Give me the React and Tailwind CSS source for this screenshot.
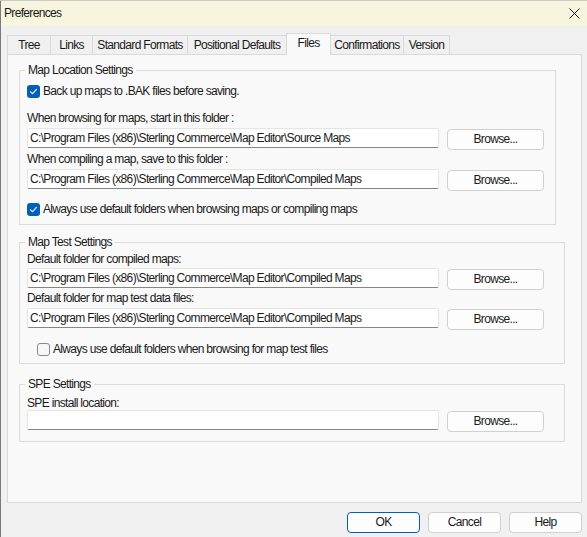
import React from "react";

const font = { fontFamily: '"Liberation Sans", Arial, sans-serif' };

const tabs = [
  { label: "Tree", w: "w-[43px]" },
  { label: "Links", w: "w-[42px]" },
  { label: "Standard Formats", w: "w-[95px]" },
  { label: "Positional Defaults", w: "w-[99px]" },
  { label: "Files", w: "w-[45px]", active: true },
  { label: "Confirmations", w: "w-[72px]", noLeft: true },
  { label: "Version", w: "w-[47px]", last: true },
];

const Check = ({ checked }) =>
  checked ? (
    <span className="flex h-[13px] w-[13px] shrink-0 items-center justify-center rounded-[3px] bg-[#005fb8]">
      <svg width="9" height="9" viewBox="0 0 9 9" fill="none">
        <path d="M1.5 4.8 L3.5 6.7 L7.5 2.3" stroke="#fff" strokeWidth="1.1" strokeLinecap="round" strokeLinejoin="round" />
      </svg>
    </span>
  ) : (
    <span className="h-[13px] w-[13px] shrink-0 rounded-[3px] border border-[#8a8a8a] bg-[#f7f7f7]" />
  );

const Button = ({ children, primary, className = "" }) => (
  <button
    className={
      "flex h-[21px] items-center justify-center rounded-[4px] bg-[#fdfdfd] text-[#1a1a1a] " +
      (primary ? "border border-[#005fb8] " : "border border-[#d0d0d0] ") +
      className
    }
  >
    {children}
  </button>
);

const PathRow = ({ value, className = "" }) => (
  <div className={"flex items-start " + className}>
    <div className="flex h-[20px] w-[412px] items-center rounded-[2px] border border-[#e5e5e5] border-b-[#868686] bg-white pl-[2px] text-[#1a1a1a]">
      {value}
    </div>
    <Button className="ml-[8px] mt-px w-[97px]">Browse...</Button>
  </div>
);

const Group = ({ title, className = "", children }) => (
  <fieldset className={"border border-[#dcdcdc] px-[7px] " + className}>
    <legend className="-ml-[2px] px-[3px] leading-[14px]">{title}</legend>
    {children}
  </fieldset>
);

const base = "C:\\Program Files (x86)\\Sterling Commerce\\Map Editor\\";

export default function App() {
  return (
    <div
      className="flex h-[537px] w-[587px] flex-col bg-[#f0f0f0] text-[12px] leading-[15px] tracking-[-0.67px] text-[#1a1a1a] shadow-[inset_1px_0_0_#7a7a7a]"
      style={font}
    >
      {/* Title bar */}
      <div className="flex h-[26px] items-center justify-between border-t border-[#c8c8c8] bg-[#f7f5dd] pl-[4px] pr-[7px] shadow-[inset_1px_0_0_#7a7a7a]">
        <span>Preferences</span>
        <svg width="11" height="11" viewBox="0 0 11 11">
          <path d="M0.5 0.5 L10.5 10.5 M10.5 0.5 L0.5 10.5" stroke="#1a1a1a" strokeWidth="1" />
        </svg>
      </div>

      {/* Tabs */}
      <div className="ml-[7px] mt-[7px] flex h-[21px] items-end">
        {tabs.map((t) =>
          t.active ? (
            <div
              key={t.label}
              className={`relative z-10 -mb-px flex h-[22px] ${t.w} justify-center border-x border-t border-[#d9d9d9] bg-[#f9f9f9] pt-[2px]`}
            >
              {t.label}
            </div>
          ) : (
            <div
              key={t.label}
              className={`flex h-[19px] ${t.w} justify-center border-t border-[#d9d9d9] bg-[#f0f0f0] pt-[2px] ${t.noLeft ? "" : "border-l"} ${t.last ? "border-r" : ""}`}
            >
              {t.label}
            </div>
          )
        )}
      </div>

      {/* Panel */}
      <div className="ml-[7px] flex h-[449px] w-[575px] flex-col border border-[#d9d9d9] bg-[#f9f9f9] pl-[11px] pt-[8px]">
        <Group title="Map Location Settings" className="w-[537px] pb-[7px]">
          <div className="mt-[7px] flex h-[15px] items-center gap-[3px]">
            <Check checked />
            <span>Back up maps to .BAK files before saving.</span>
          </div>
          <div className="mt-[12px]">When browsing for maps, start in this folder :</div>
          <PathRow className="mt-[2px]" value={base + "Source Maps"} />
          <div className="mt-[2px]">When compiling a map, save to this folder :</div>
          <PathRow className="mt-[2px]" value={base + "Compiled Maps"} />
          <div className="mt-[11px] flex h-[15px] items-center gap-[3px]">
            <Check checked />
            <span>Always use default folders when browsing maps or compiling maps</span>
          </div>
        </Group>

        <Group title="Map Test Settings" className="mt-[10px] w-[546px] pb-[6px]">
          <div className="mt-[3px]">Default folder for compiled maps:</div>
          <PathRow className="mt-[1px]" value={base + "Compiled Maps"} />
          <div className="mt-[1px]">Default folder for map test data files:</div>
          <PathRow className="mt-[2px]" value={base + "Compiled Maps"} />
          <div className="ml-[10px] mt-[12px] flex h-[15px] items-center gap-[3px]">
            <Check />
            <span>Always use default folders when browsing for map test files</span>
          </div>
        </Group>

        <Group title="SPE Settings" className="mt-[13px] w-[546px] pb-[9px]">
          <div className="mt-[5px] leading-[14px]">SPE install location:</div>
          <PathRow value="" />
        </Group>
      </div>

      {/* Dialog buttons */}
      <div className="mt-[9px] flex justify-end gap-[8px] pr-[5px]">
        <Button primary className="w-[73px]">OK</Button>
        <Button className="w-[73px]">Cancel</Button>
        <Button className="w-[73px]">Help</Button>
      </div>
    </div>
  );
}
